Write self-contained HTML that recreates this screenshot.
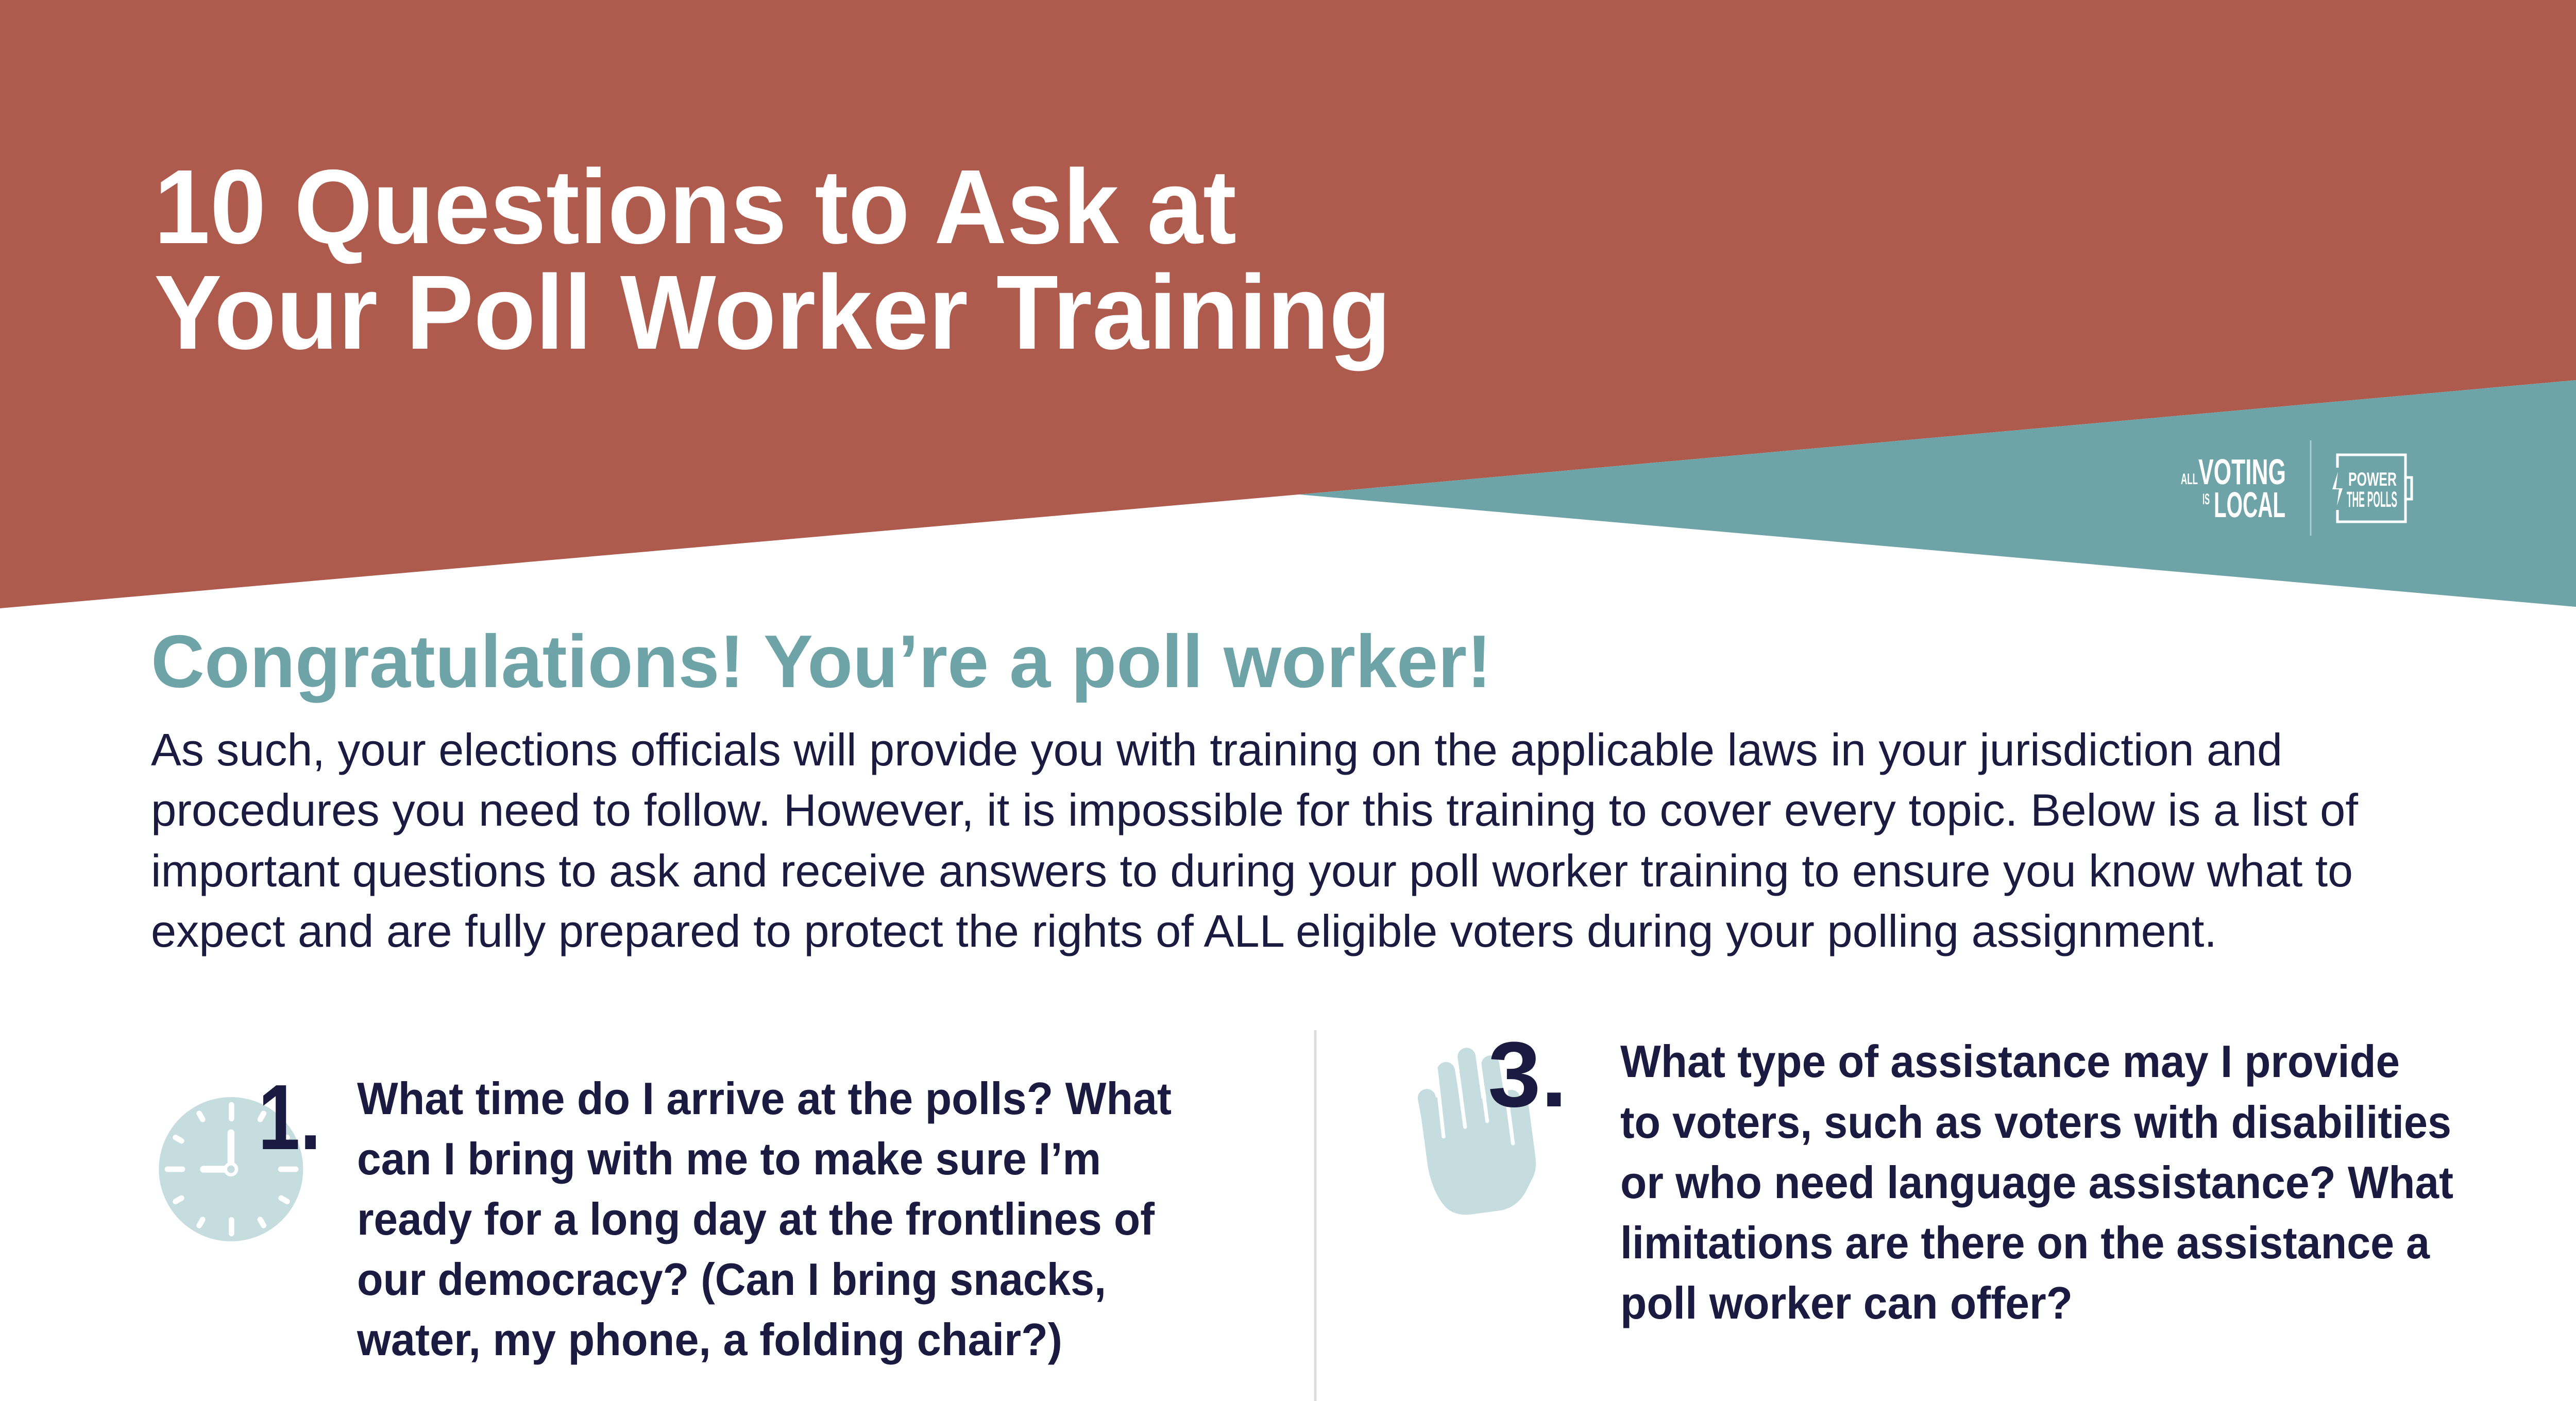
<!DOCTYPE html>
<html><head><meta charset="utf-8"><style>
html,body{margin:0;padding:0;background:#fff;width:5100px;height:2720px;overflow:hidden;}
svg{display:block;}
text{font-family:"Liberation Sans",sans-serif;}
</style></head><body>
<svg width="5100" height="2720" viewBox="0 0 5100 2720" xmlns="http://www.w3.org/2000/svg">
<rect width="5100" height="2720" fill="#fff"/>
<polygon points="0,0 5100,0 5100,729 2521,960 0,1181" fill="#ae5a4d"/>
<polygon points="2521,960 5100,729 5100,1187" fill="#6ea4a8"/>

<g fill="#fff" font-weight="700">
<text x="299" y="472" font-size="205" textLength="2101" lengthAdjust="spacingAndGlyphs">10 Questions to Ask at</text>
<text x="299" y="677" font-size="205" textLength="2401" lengthAdjust="spacingAndGlyphs">Your Poll Worker Training</text>
</g>

<g fill="#fff" font-weight="700" font-family="Liberation Sans Narrow, Liberation Sans, sans-serif">
<text x="4233" y="940" font-size="30" textLength="33" lengthAdjust="spacingAndGlyphs">ALL</text>
<text x="4267" y="940" font-size="70" textLength="170" lengthAdjust="spacingAndGlyphs">VOTING</text>
<text x="4275" y="979" font-size="30" textLength="14" lengthAdjust="spacingAndGlyphs">IS</text>
<text x="4297" y="1004" font-size="70" textLength="139" lengthAdjust="spacingAndGlyphs">LOCAL</text>
<text x="4558" y="943" font-size="37" textLength="94" lengthAdjust="spacingAndGlyphs">POWER</text>
<text x="4555" y="984" font-size="43" textLength="98" lengthAdjust="spacingAndGlyphs">THE POLLS</text>
</g>
<line x1="4485" y1="855" x2="4485" y2="1040" stroke="#a9cdd0" stroke-width="3"/>
<path d="M4537,908 L4537,883 L4669,883 L4669,1013 L4537,1013 L4537,990" fill="none" stroke="#fff" stroke-width="5"/>
<path d="M4669,927 L4681,927 L4681,969 L4669,969" fill="none" stroke="#fff" stroke-width="5"/>
<polygon points="4538,916 4527,950 4540,950 4536,982 4547,948 4534,948" fill="#fff"/>

<text x="293" y="1334" font-size="145" font-weight="700" fill="#6ea4a8" textLength="2602" lengthAdjust="spacingAndGlyphs">Congratulations! You’re a poll worker!</text>
<g fill="#1b1a40" font-size="88">
<text x="293" y="1486" textLength="4137" lengthAdjust="spacingAndGlyphs">As such, your elections officials will provide you with training on the applicable laws in your jurisdiction and</text>
<text x="293" y="1603" textLength="4284" lengthAdjust="spacingAndGlyphs">procedures you need to follow.  However, it is impossible for this training to cover every topic.  Below is a list of</text>
<text x="293" y="1721" textLength="4274" lengthAdjust="spacingAndGlyphs">important questions to ask and receive answers to during your poll worker training to ensure you know what to</text>
<text x="293" y="1838" textLength="4010" lengthAdjust="spacingAndGlyphs">expect and are fully prepared to protect the rights of ALL eligible voters during your polling assignment.</text>
</g>

<line x1="2553" y1="2000" x2="2553" y2="2720" stroke="#dcdcdc" stroke-width="5"/>

<svg x="280" y="2040" width="360" height="400" viewBox="0 0 1080 1200">
<circle cx="505" cy="690" r="420" fill="#c6dde0"/>
<g stroke="#fff" stroke-width="32" stroke-linecap="round">
<line x1="508" y1="315" x2="508" y2="395"/>
<line x1="508" y1="985" x2="508" y2="1065"/>
<line x1="135" y1="690" x2="222" y2="690"/>
<line x1="795" y1="690" x2="882" y2="690"/>
<line x1="320" y1="365" x2="340" y2="400"/>
<line x1="695" y1="365" x2="675" y2="400"/>
<line x1="182" y1="505" x2="217" y2="525"/>
<line x1="832" y1="505" x2="797" y2="525"/>
<line x1="182" y1="878" x2="217" y2="858"/>
<line x1="832" y1="878" x2="797" y2="858"/>
<line x1="320" y1="1018" x2="340" y2="983"/>
<line x1="695" y1="1018" x2="675" y2="983"/>
<line x1="505" y1="478" x2="505" y2="670" stroke-width="40"/>
<line x1="345" y1="690" x2="480" y2="690" stroke-width="40"/>
</g>
<circle cx="505" cy="690" r="32" fill="#c6dde0" stroke="#fff" stroke-width="20"/>
</svg>
<text x="501" y="2231" font-size="180" font-weight="700" fill="#1b1a40" textLength="122" lengthAdjust="spacingAndGlyphs">1.</text>

<g fill="#1b1a40" font-size="88" font-weight="700">
<text x="693" y="2163" textLength="1581" lengthAdjust="spacingAndGlyphs">What time do I arrive at the polls? What</text>
<text x="693" y="2280" textLength="1444" lengthAdjust="spacingAndGlyphs">can I bring with me to make sure I’m</text>
<text x="693" y="2397" textLength="1548" lengthAdjust="spacingAndGlyphs">ready for a long day at the frontlines of</text>
<text x="693" y="2514" textLength="1454" lengthAdjust="spacingAndGlyphs">our democracy? (Can I bring snacks,</text>
<text x="693" y="2631" textLength="1369" lengthAdjust="spacingAndGlyphs">water, my phone, a folding chair?)</text>
</g>

<svg x="2700" y="1990" width="400" height="400" viewBox="0 0 1200 1200">
<g fill="#c6dde0">
<path d="M160,420 L215,830 Q240,960 300,1040 Q350,1110 450,1105 L640,1080 Q740,1060 790,960 L830,880 Q850,830 840,760 L800,460 L640,430 L160,420 Z"/>
<g stroke="#c6dde0" stroke-width="105" stroke-linecap="round">
<line x1="208" y1="425" x2="260" y2="700"/>
<line x1="320" y1="268" x2="380" y2="640"/>
<line x1="440" y1="185" x2="500" y2="620"/>
<line x1="578" y1="230" x2="650" y2="700"/>
<line x1="700" y1="430" x2="760" y2="750"/>
</g>
</g>
<g stroke="#fff" stroke-width="22" stroke-linecap="round">
<line x1="306" y1="650" x2="262" y2="260"/>
<line x1="431" y1="594" x2="378" y2="200"/>
<line x1="560" y1="560" x2="505" y2="150"/>
<line x1="710" y1="690" x2="650" y2="240"/>
</g>
</svg>
<text x="2888" y="2148" font-size="180" font-weight="700" fill="#1b1a40" textLength="154" lengthAdjust="spacingAndGlyphs">3.</text>

<g fill="#1b1a40" font-size="88" font-weight="700">
<text x="3145" y="2091" textLength="1513" lengthAdjust="spacingAndGlyphs">What type of assistance may I provide</text>
<text x="3145" y="2209" textLength="1613" lengthAdjust="spacingAndGlyphs">to voters, such as voters with disabilities</text>
<text x="3145" y="2326" textLength="1617" lengthAdjust="spacingAndGlyphs">or who need language assistance? What</text>
<text x="3145" y="2443" textLength="1571" lengthAdjust="spacingAndGlyphs">limitations are there on the assistance a</text>
<text x="3145" y="2560" textLength="878" lengthAdjust="spacingAndGlyphs">poll worker can offer?</text>
</g>
</svg>
</body></html>
